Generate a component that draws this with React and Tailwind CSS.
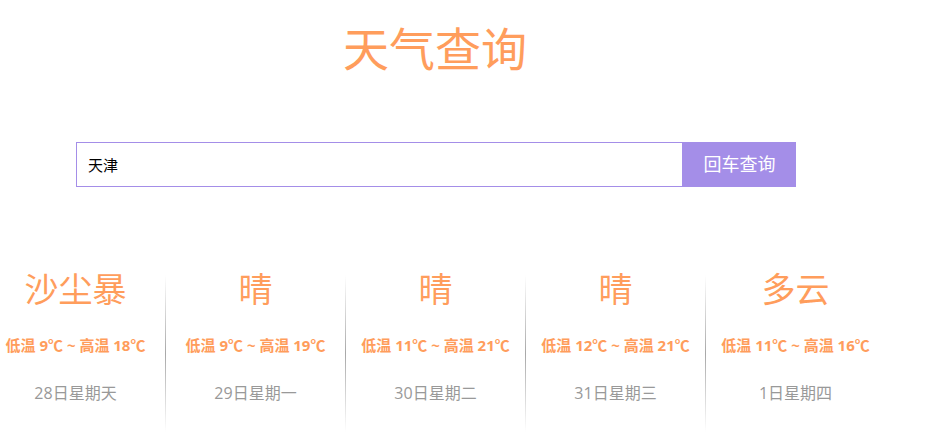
import { useState } from "react";

const days = [
  { type: "沙尘暴", low: 9, high: 18, date: "28日星期天" },
  { type: "晴", low: 9, high: 19, date: "29日星期一" },
  { type: "晴", low: 11, high: 21, date: "30日星期二" },
  { type: "晴", low: 12, high: 21, date: "31日星期三" },
  { type: "多云", low: 11, high: 16, date: "1日星期四" },
];

function DayCard({ day }) {
  return (
    <div className="w-[179px] flex flex-col items-center pb-[27px]">
      <div className="text-[34px] leading-[48px] text-[#ff9d5c]">{day.type}</div>
      <div className="mt-[22px] text-[15px] leading-[20px] font-bold text-[#ff9d5c] whitespace-nowrap">
        低温 {day.low}℃ ~ 高温 {day.high}℃
      </div>
      <div className="mt-[26px] text-[16px] leading-[24px] text-[#999]">{day.date}</div>
    </div>
  );
}

function Divider() {
  return (
    <div className="w-px self-stretch pt-[10px]">
      <div className="h-full bg-gradient-to-b from-transparent via-[#a8a8a8] to-transparent" />
    </div>
  );
}

export default function App() {
  const [city, setCity] = useState("天津");

  return (
    <div
      className="w-[900px] ml-[-15px] bg-white"
      style={{ fontFamily: '"Open Sans", "Noto Sans CJK SC", sans-serif' }}
    >
      <h1 className="mt-[18px] text-center text-[46px] leading-[60px] text-[#ff9d5c]">天气查询</h1>

      <div className="mt-[64px] ml-[91px] w-[720px] flex">
        <input
          value={city}
          onChange={(e) => setCity(e.target.value)}
          className="flex-1 h-[45px] border border-[#a48ee8] pl-[11px] text-[15px] text-black outline-none"
        />
        <button className="w-[113px] h-[45px] bg-[#a48ee8] text-white text-[18px]">回车查询</button>
      </div>

      <div className="mt-[78px] ml-px flex">
        {days.map((d, i) => (
          <div key={i} className="flex">
            {i > 0 && <Divider />}
            <DayCard day={d} />
          </div>
        ))}
      </div>
    </div>
  );
}
